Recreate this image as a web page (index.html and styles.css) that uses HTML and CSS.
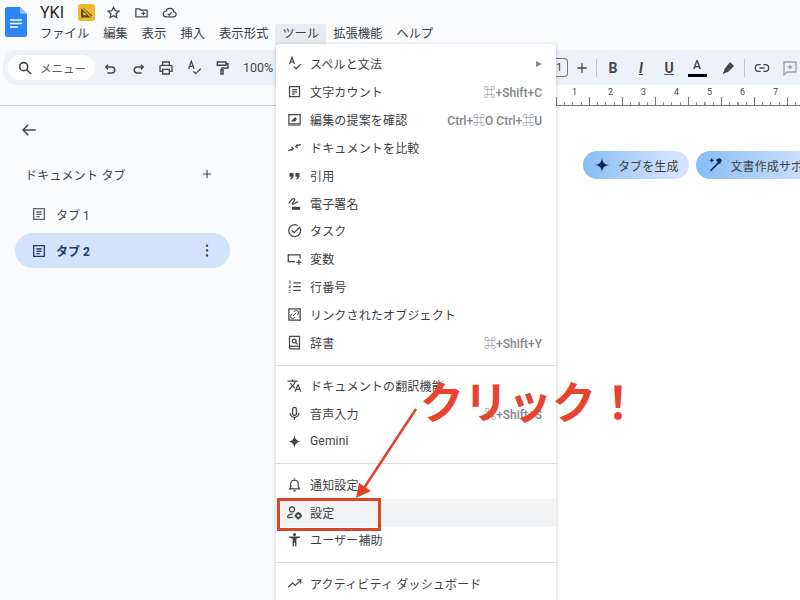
FILE: index.html
```html
<!DOCTYPE html>
<html lang="ja">
<head>
<meta charset="utf-8">
<title>YKI</title>
<link rel="stylesheet" href="styles.css">
</head>
<body>
<div class="page">
  <header class="header">
    <svg class="logo" viewBox="0 0 22 30"><path d="M2 0h13l7 7v21a2 2 0 0 1-2 2H2a2 2 0 0 1-2-2V2a2 2 0 0 1 2-2z" fill="#2b86f5"/><path d="M15 0l7 7h-5a2 2 0 0 1-2-2z" fill="#8ab9fa"/><path d="M5 13h12M5 16.5h12M5 20h8" stroke="#fff" stroke-width="1.6"/></svg>
    <div class="head-col">
      <div class="title-row">
        <span class="doc-title">YKI</span>
        <span class="badge"><svg class="ic-badge" viewBox="0 0 24 24" fill="none"><path d="M2 3l4 0 16 14v4H2z" fill="#5c4a17"/><path d="M6 10v7h7z" fill="#f0b92f"/><path d="M1 1l22 22" stroke="#f0b92f" stroke-width="2.500"/></svg></span>
        <svg class="ic-title" viewBox="0 0 24 24" fill="none" stroke="#444746" stroke-width="2"><path d="M12 3.500l2.600 5.600 6 .7-4.500 4.100 1.200 6L12 17l-5.300 2.900 1.200-6L3.400 9.800l6-.7z"/></svg>
        <svg class="ic-title" viewBox="0 0 24 24" fill="none" stroke="#444746" stroke-width="2"><path d="M3 6h6l2 2h10v11H3z"/><path d="M12 13.500h6M15 10.500v6"/></svg>
        <svg class="ic-title" viewBox="0 0 24 24" fill="none" stroke="#444746" stroke-width="2"><path d="M7 19a4.500 4.500 0 0 1-.6-9A6.500 6.500 0 0 1 19 11a4 4 0 0 1-1 8z"/><path d="M9 14l2.500 2.200 4-4.200"/></svg>
      </div>
      <nav class="menubar">
        <span class="mb">ファイル</span><span class="mb">編集</span><span class="mb">表示</span><span class="mb">挿入</span><span class="mb">表示形式</span><span class="mb mb-on">ツール</span><span class="mb">拡張機能</span><span class="mb">ヘルプ</span>
      </nav>
    </div>
  </header>

  <div class="toolbar">
    <div class="search">
      <svg class="ic" viewBox="0 0 24 24" fill="none" stroke="#444746" stroke-width="2.400"><circle cx="10" cy="10" r="6"/><path d="M14.500 14.500L21 21"/></svg>
      <span>メニュー</span>
    </div>
    <div class="tb"><svg class="ic-s" viewBox="0 0 24 24" fill="none" stroke="#444746" stroke-width="2.400"><path d="M8 6L4.500 9.500 8 13"/><path d="M5 9.500h9a4.700 4.700 0 0 1 0 9.500H7"/></svg></div>
    <div class="tb"><svg class="ic-s" viewBox="0 0 24 24" fill="none" stroke="#444746" stroke-width="2.400"><path d="M16 6l3.500 3.500L16 13"/><path d="M19 9.500h-9a4.700 4.700 0 0 0 0 9.500h7"/></svg></div>
    <div class="tb"><svg class="ic" viewBox="0 0 24 24" fill="none" stroke="#444746" stroke-width="2"><path d="M7 8V3h10v5"/><path d="M7 17H3V9.500A1.500 1.500 0 0 1 4.500 8h15A1.500 1.500 0 0 1 21 9.500V17h-4"/><path d="M7 14h10v7H7z"/></svg></div>
    <div class="tb"><svg class="ic" viewBox="0 0 24 24" fill="none" stroke="#444746" stroke-width="2"><path d="M4 13L8 2l4 11M5.500 9.500h5"/><path d="M11 17l3.500 3.500L22 13"/></svg></div>
    <div class="tb"><svg class="ic" viewBox="0 0 24 24" fill="none" stroke="#444746" stroke-width="2.200"><path d="M5 3h13v5H5z"/><path d="M18 5.500h3V12h-9v3"/><path d="M10.500 15h3v6h-3z"/></svg></div>
    <span class="zoom-val">100%</span>
    <div class="tb-right">
      <span class="size-box">1</span>
      <div class="tb"><svg class="ic" viewBox="0 0 24 24" fill="none" stroke="#444746" stroke-width="2"><path d="M5 12h14M12 5v14"/></svg></div>
      <span class="sep"></span>
      <div class="tb tb-b"><b>B</b></div>
      <div class="tb tb-i">I</div>
      <div class="tb tb-u">U</div>
      <div class="tb tb-a"><span>A</span><i class="a-bar"></i></div>
      <div class="tb tb-w"><svg class="ic" viewBox="0 0 24 24" fill="#444746"><path d="M15 3l6 6-9 9-4 1-3 2-1-1 2-3 1-4z"/></svg></div>
      <span class="sep sep-b"></span>
      <div class="tb"><svg class="ic" viewBox="0 0 24 24" fill="none" stroke="#444746" stroke-width="2"><path d="M10 7H7a5 5 0 0 0 0 10h3M14 7h3a5 5 0 0 1 0 10h-3M8 12h8"/></svg></div>
      <div class="tb tb-last"><svg class="ic" viewBox="0 0 24 24" fill="none" stroke="#9aa0a6" stroke-width="2"><path d="M3 3h18v15H8l-5 4z"/><path d="M12 7v7M8.500 10.500h7"/></svg></div>
    </div>
  </div>

  <div class="ruler">
    <div class="scale"><span>1</span><span>2</span><span>3</span><span>4</span><span>5</span><span>6</span><span>7</span></div>
  </div>

  <main class="main">
    <aside class="sidebar">
      <svg class="back" viewBox="0 0 24 24" fill="none" stroke="#444746" stroke-width="2"><path d="M21 12H4M11 5l-7 7 7 7"/></svg>
      <div class="tabs-head"><span>ドキュメント タブ</span><svg class="ic-sm" viewBox="0 0 24 24" fill="none" stroke="#444746" stroke-width="2"><path d="M5 12h14M12 5v14"/></svg></div>
      <div class="tab">
        <svg class="ic" viewBox="0 0 24 24" fill="none" stroke="#5f6368" stroke-width="2"><path d="M4 4h16v16H4z"/><path d="M8 9h8M8 12.500h8M8 16h5"/></svg>
        <span>タブ 1</span>
      </div>
      <div class="tab tab-on">
        <svg class="ic" viewBox="0 0 24 24" fill="none" stroke="#1f3a68" stroke-width="2"><path d="M4 4h16v16H4z"/><path d="M8 9h8M8 12.500h8M8 16h5"/></svg>
        <span>タブ 2</span>
        <svg class="dots" viewBox="0 0 4 16" fill="#444746"><circle cx="2" cy="2" r="1.500"/><circle cx="2" cy="8" r="1.500"/><circle cx="2" cy="14" r="1.500"/></svg>
      </div>
    </aside>
    <section class="doc">
      <span class="chip"><svg class="ic" viewBox="0 0 24 24" fill="#0b2a52"><path d="M12 1c.6 7 4 10.400 11 11-7 .6-10.400 4-11 11-.6-7-4-10.400-11-11 7-.6 10.400-4 11-11z"/></svg>タブを生成</span>
      <span class="chip chip-2"><svg class="ic" viewBox="0 0 24 24" fill="none" stroke="#0b2a52" stroke-width="2.400"><path d="M5 21L19 7"/><path d="M15 5l4-2 2 2-2 4z" fill="#0b2a52"/><path d="M7 2v6M4 5h6" stroke-width="1.800"/></svg>文書作成サポート</span>
    </section>
  </main>

  <div class="menu">
    <div class="row"><svg class="mi" viewBox="0 0 24 24" fill="none" stroke="#444746" stroke-width="2"><path d="M4 13L8 2l4 11M5.500 9.500h5"/><path d="M11 17l3.500 3.500L22 13"/></svg><span class="lbl">スペルと文法</span><i class="tri"></i></div>
    <div class="row"><svg class="mi" viewBox="0 0 24 24" fill="none" stroke="#444746" stroke-width="2"><path d="M4 4h16v16H4z"/><path d="M8 9h8M8 12.500h8M8 16h5"/></svg><span class="lbl">文字カウント</span><span class="key">⌘+Shift+C</span></div>
    <div class="row"><svg class="mi" viewBox="0 0 24 24" fill="none" stroke="#444746" stroke-width="2"><path d="M3 4h18v15H3z"/><path d="M2 21h20" stroke-width="1.500"/><path d="M6 15l7-7 3 3-3 4z" fill="#444746" stroke="none"/></svg><span class="lbl">編集の提案を確認</span><span class="key">Ctrl+⌘O Ctrl+⌘U</span></div>
    <div class="row"><svg class="mi" viewBox="0 0 24 24" fill="none" stroke="#444746" stroke-width="2"><path d="M2 17l8-3M7 11l3 3-3 3"/><path d="M22 7l-8 3M17 13l-3-3 3-3"/></svg><span class="lbl">ドキュメントを比較</span></div>
    <div class="row"><svg class="mi" viewBox="0 0 24 24" fill="#444746"><path d="M4 8h6.500v6l-3 4H5l2-4H4zM13.500 8H20v6l-3 4h-2.500l2-4h-3z"/></svg><span class="lbl">引用</span></div>
    <div class="row"><svg class="mi" viewBox="0 0 24 24" fill="none" stroke="#444746" stroke-width="2"><path d="M3 12c3-6 7-9 9-7s-5 7-3 8 6-4 9-3"/><path d="M9 18h11v3H9z" fill="#444746"/></svg><span class="lbl">電子署名</span></div>
    <div class="row"><svg class="mi" viewBox="0 0 24 24" fill="none" stroke="#444746" stroke-width="2"><path d="M21 8.500A9.500 9.500 0 1 1 17 4"/><path d="M7.500 11.500l4 4L21 6"/></svg><span class="lbl">タスク</span></div>
    <div class="row"><svg class="mi" viewBox="0 0 24 24" fill="none" stroke="#444746" stroke-width="2"><path d="M21 12V6H2v11h11"/><path d="M19 14v8M15 18h8"/></svg><span class="lbl">変数</span></div>
    <div class="row"><svg class="mi" viewBox="0 0 24 24" fill="none" stroke="#444746" stroke-width="2"><path d="M10 6h12M10 12h12M10 18h12"/><path d="M3 3.500L5 3v5M3 11h3l-3 3h3M3 18h3M3 21.500h3" stroke-width="1.300"/></svg><span class="lbl">行番号</span></div>
    <div class="row"><svg class="mi" viewBox="0 0 24 24" fill="none" stroke="#444746" stroke-width="2"><path d="M3 3h18v18H3z"/><path d="M9.500 14.500l5-5M11 8l1.500-1.500a3 3 0 0 1 5 5L16 13M13 16l-1.500 1.500a3 3 0 0 1-5-5L8 11" stroke-width="1.600"/></svg><span class="lbl">リンクされたオブジェクト</span></div>
    <div class="row"><svg class="mi" viewBox="0 0 24 24" fill="none" stroke="#444746" stroke-width="2"><path d="M4 2h16v20H6a2 2 0 0 1-2-2z"/><path d="M4 18h16"/><circle cx="11.500" cy="9.500" r="3"/><path d="M14 12l3 3"/></svg><span class="lbl">辞書</span><span class="key">⌘+Shift+Y</span></div>
    <hr class="div div-a">
    <div class="row"><svg class="mi" viewBox="0 0 24 24" fill="#444746"><path d="M12.870 15.070l-2.540-2.510.03-.03c1.740-1.940 2.980-4.170 3.710-6.530H17V4h-7V2H8v2H1v1.990h11.170C11.500 7.920 10.440 9.750 9 11.350 8.070 10.320 7.300 9.190 6.690 8h-2c.73 1.630 1.730 3.170 2.980 4.560l-5.090 5.020L4 19l5-5 3.110 3.110.76-2.040zM18.500 10h-2L12 22h2l1.120-3h4.750L21 22h2l-4.500-12zm-2.620 7l1.620-4.330L19.120 17h-3.240z"/></svg><span class="lbl">ドキュメントの翻訳機能</span></div>
    <div class="row"><svg class="mi" viewBox="0 0 24 24" fill="none" stroke="#444746" stroke-width="2"><rect x="9" y="2" width="6" height="13" rx="3"/><path d="M5 11a7 7 0 0 0 14 0M12 18v4"/></svg><span class="lbl">音声入力</span><span class="key">⌘+Shift+S</span></div>
    <div class="row"><svg class="mi" viewBox="0 0 24 24" fill="#444746"><path d="M12 1c.5 7 4 10.500 11 11-7 .5-10.500 4-11 11-.5-7-4-10.500-11-11 7-.5 10.500-4 11-11z"/></svg><span class="lbl">Gemini</span></div>
    <hr class="div div-b">
    <div class="row"><svg class="mi" viewBox="0 0 24 24" fill="none" stroke="#444746" stroke-width="2"><path d="M4 19h16l-2-3v-5a6 6 0 0 0-12 0v5z"/><path d="M10 22h4M12 3V2"/></svg><span class="lbl">通知設定</span></div>
    <div class="row row-on"><svg class="mi" viewBox="0 0 24 24" fill="none" stroke="#444746" stroke-width="2"><circle cx="8" cy="7" r="4"/><path d="M1 20v-1c0-3 4-4.500 8-4.500"/><path d="M1 20h9"/><circle cx="18" cy="17" r="3.500" stroke-width="3"/><path d="M18 11v2M18 21v2M12 17h2M22 17h2" stroke-width="2.400"/></svg><span class="lbl">設定</span></div>
    <div class="row"><svg class="mi" viewBox="0 0 24 24" fill="#444746"><circle cx="12" cy="4" r="2.500"/><path d="M3 7h18v2.200l-6 1.300V23h-2v-6h-2v6H9V10.500L3 9.200z"/></svg><span class="lbl">ユーザー補助</span></div>
    <hr class="div">
    <div class="row"><svg class="mi" viewBox="0 0 24 24" fill="none" stroke="#444746" stroke-width="2"><path d="M2 18l7-7 4 4 9-8"/><path d="M16 6h6v6"/></svg><span class="lbl">アクティビティ ダッシュボード</span></div>
  </div>

  <div class="mark-box"></div>
  <svg class="arrow" viewBox="0 0 800 600"><path d="M416 409L364 488" stroke="#d9442a" stroke-width="2.500"/><path d="M356 498l3-15 12 8z" fill="#e2401f"/></svg>
  <div class="callout">クリック！</div>
</div>
</body>
</html>
```
FILE: styles.css
```css
* { box-sizing: border-box; }
html, body { margin: 0; padding: 0; height: 100%; overflow: hidden; }
body { font-family: Roboto, "Noto Sans CJK JP", "DejaVu Sans", sans-serif; color: #3c4043; background: #fff; }
.page { position: relative; width: 800px; height: 600px; overflow: hidden; display: flex; flex-direction: column; background: #f9fbfd; }

/* Header */
.header { height: 50px; display: flex; padding: 7px 0 0 5px; flex: none; }
.logo { width: 22px; height: 30px; flex: none; }
.head-col { margin-left: 6px; margin-top: -7px; display: flex; flex-direction: column; }
.title-row { height: 24px; display: flex; align-items: center; padding-left: 7px; }
.doc-title { font-size: 16px; color: #1f1f1f; width: 38px; }
.badge { width: 17px; height: 17px; border-radius: 3px; background: #f0b92f; display: flex; align-items: center; justify-content: center; margin-right: 11px; }
.ic-badge { width: 13px; height: 13px; }
.ic-title { width: 15px; height: 15px; margin-right: 13px; }
.menubar { display: flex; height: 21px; }
.mb { padding: 0 7px; font-size: 12.300px; line-height: 20px; color: #3c4043; white-space: nowrap; }
.mb-on { background: #e8ecf1; border-radius: 3px 3px 0 0; }

/* Toolbar */
.toolbar { height: 35px; margin-left: 3px; background: #edf2fa; border-radius: 14px 0 0 14px; display: flex; align-items: center; padding-left: 5px; flex: none; }
.search { width: 87px; height: 25px; background: #fff; border-radius: 13px; display: flex; align-items: center; gap: 7px; padding-left: 9px; font-size: 11.500px; color: #5f6368; margin-right: 1px; white-space: nowrap; }
.tb { width: 28px; height: 28px; display: flex; align-items: center; justify-content: center; flex: none; font-size: 14px; color: #444746; position: relative; }
.ic { width: 16px; height: 16px; flex: none; }
.ic-s { width: 15px; height: 15px; flex: none; margin-top: 2px; }
.zoom-val { font-size: 12.500px; color: #444746; margin-left: 7px; }
.tb-right { margin-left: auto; display: flex; align-items: center; }
.size-box { width: 12px; height: 19px; border: 1px solid #747775; border-left: 0; border-radius: 0 4px 4px 0; font-size: 11px; line-height: 17px; text-align: left; }
.sep { width: 1px; height: 18px; background: #c7c7c7; margin: 0 2px 0 0; }
.sep-b { margin: 0 3px 0 0; }
.tb-b { font-weight: 700; }
.tb-b b { font-weight: 700; }
.tb-i { font-style: italic; font-weight: 700; text-decoration: underline; }
.tb-u { font-weight: 700; text-decoration: underline; }
.tb-a { flex-direction: column; font-size: 12px; font-weight: 500; line-height: 13px; }
.a-bar { display: block; width: 19px; height: 3px; background: #000; margin-top: 2px; }
.tb-w { width: 33px; }
.tb-last { width: 20px; margin-left: 4px; }

/* Ruler */
.ruler { height: 21px; flex: none; border-bottom: 1px solid #c9ccd1; display: flex; justify-content: flex-end; }
.scale { width: 260px; height: 21px; padding-left: 1px; display: flex; background-color: #fff; border-bottom: 1px solid #777; background-image: repeating-linear-gradient(90deg, #777 0 1px, transparent 1px 33px), repeating-linear-gradient(90deg, #999 0 1px, transparent 1px 8.250px); background-size: 100% 8px, 100% 3px; background-position: 16px bottom, 16px bottom; background-repeat: no-repeat; }
.scale span { width: 33px; font-size: 9px; line-height: 15px; padding-left: 32px; color: #444746; flex: none; }
.scale span:first-child { margin-left: 0; padding-left: 31px; width: 35px; }

/* Main */
.main { flex: 1; display: flex; min-height: 0; }
.sidebar { width: 275px; flex: none; padding: 15px 45px 0 15px; }
.back { display: block; width: 18px; height: 18px; margin: 0 0 0 5px; }
.tabs-head { display: flex; align-items: center; justify-content: space-between; margin: 25px 0 0 10px; padding-right: 20px; height: 20px; font-size: 12px; letter-spacing: .2px; color: #444746; }
.ic-sm { width: 14px; height: 14px; margin-right: -4px; }
.tab { height: 35px; display: flex; align-items: center; gap: 9px; padding-left: 16px; font-size: 12px; color: #444746; margin-top: 3px; border-radius: 18px; position: relative; }
.tabs-head + .tab { margin-top: 14px; height: 32px; }
.tab-on { background: #d3e3fd; color: #1f3a68; font-weight: 700; margin-top: 3px; }
.dots { position: absolute; right: 21px; top: 11px; width: 4px; height: 13px; }
.doc { flex: 1; background: #fff; display: flex; align-items: flex-start; gap: 7px; padding: 45px 0 0 308px; overflow: hidden; }
.chip { height: 28px; flex: none; display: flex; align-items: center; gap: 8px; padding: 0 10px 0 11px; border-radius: 14px; font-size: 12px; color: #3c4043; letter-spacing: .1px; background: linear-gradient(90deg, #87bdf4 0%, #d3e3fd 85%); white-space: nowrap; }

/* Tools menu */
.menu { position: absolute; left: 276px; top: 44px; width: 280px; height: 600px; background: #fff; border-radius: 4px; box-shadow: 0 1px 4px rgba(60,64,67,.3); padding-top: 6px; }
.row { height: 27.850px; display: flex; align-items: center; padding: 0 14px 0 11px; font-size: 12px; letter-spacing: .17px; color: #3c4043; position: relative; white-space: nowrap; }
.div-b ~ .row { padding-bottom: 1px; }
.row-on { background: #f1f3f4; }
.mi { width: 15px; height: 15px; flex: none; margin-right: 8px; }
.lbl { flex: 1; }
.key { font-size: 12px; font-weight: 500; letter-spacing: 0; color: #80868b; }
.tri { width: 0; height: 0; border-left: 6px solid #80868b; border-top: 3.500px solid transparent; border-bottom: 3.500px solid transparent; }
.div { height: 1px; border: 0; background: #dadce0; margin: 7.500px 0 7px; }
.div-a { margin: 8.500px 0 6px; }

/* Annotation */
.mark-box { position: absolute; left: 277px; top: 498px; width: 104px; height: 33px; border: 3px solid #d9442a; }
.arrow { position: absolute; left: 0; top: 0; width: 800px; height: 600px; pointer-events: none; }
.callout { position: absolute; left: 420px; top: 371px; font-size: 44px; line-height: 58px; font-weight: 700; color: #e8432f; white-space: nowrap; font-family: "Noto Sans CJK JP", sans-serif; }
```
